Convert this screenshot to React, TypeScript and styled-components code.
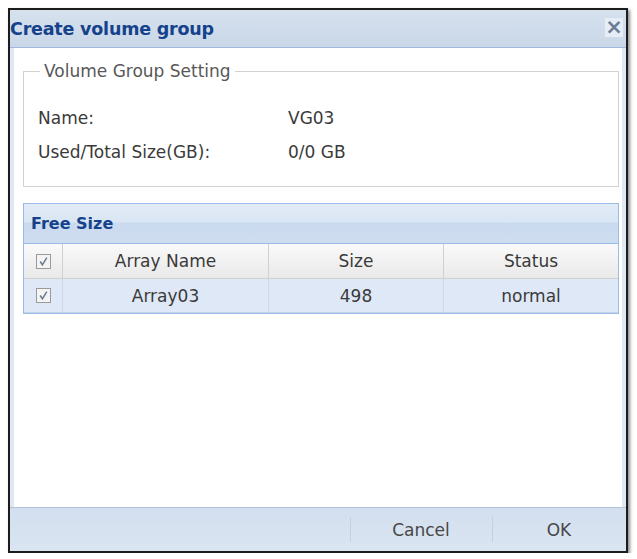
import React from "react";
import styled, { createGlobalStyle } from "styled-components";

const GlobalStyle = createGlobalStyle`
  html, body {
    margin: 0;
    padding: 0;
    background: #ffffff;
  }
  body {
    font-family: "DejaVu Sans", Verdana, sans-serif;
  }
`;

const Page = styled.div`
  padding: 8px 0 0 8px;
`;

const Window = styled.div`
  width: 620px;
  height: 545px;
  box-sizing: border-box;
  border: 2px solid #1c1c1c;
  box-shadow: 2px 2px 3px rgba(0, 0, 0, 0.45);
  display: flex;
  flex-direction: column;
  background: #dfe8f3;
`;

const TitleBar = styled.div`
  height: 37px;
  flex: none;
  display: flex;
  align-items: center;
  justify-content: space-between;
  padding: 0 3px 0 0;
  background: linear-gradient(#d6e1ee, #c9d7e8);
  border-bottom: 1px solid #9fb9dc;
`;

const Title = styled.h1`
  margin: 0;
  font-size: 17.5px;
  font-weight: bold;
  color: #15428b;
  letter-spacing: -0.2px;
`;

const CloseButton = styled.div`
  width: 18px;
  height: 19px;
  margin-top: -2px;
  display: flex;
  align-items: center;
  justify-content: center;
  background: #e6edf5;
  color: #6a7d96;
  font-weight: bold;
  font-size: 21px;
  line-height: 1;
`;

const Body = styled.div`
  flex: 1;
  background: #ffffff;
  margin: 0 4px;
  padding: 13px 3px 0 9px;
  display: flex;
  flex-direction: column;
  gap: 16px;
`;

const FieldSet = styled.fieldset`
  margin: 0;
  padding: 27px 14px 24px;
  border: 1px solid #d2d2d2;
  display: grid;
  grid-template-columns: 250px 1fr;
  row-gap: 14px;
  font-size: 17px;
  color: #3a3a3a;
`;

const Legend = styled.legend`
  margin-left: 2px;
  padding: 0 4px;
  font-size: 17px;
  color: #585858;
`;

const Label = styled.div``;

const Value = styled.div``;

const Grid = styled.div`
  border: 1px solid #99bbe8;
  font-size: 17px;
`;

const GridTitle = styled.div`
  height: 39px;
  display: flex;
  align-items: center;
  padding-left: 7px;
  background: linear-gradient(#e2ebf6 0%, #dae6f4 45%, #cadaef 50%, #cfddf0 100%);
  border-bottom: 1px solid #99bbe8;
  font-weight: bold;
  font-size: 16px;
  color: #15428b;
`;

const Row = styled.div<{ $header?: boolean }>`
  display: grid;
  grid-template-columns: 39px 206px 175px 1fr;
  height: ${(p) => (p.$header ? "34px" : "33px")};
  background: ${(p) =>
    p.$header ? "linear-gradient(#fafafa, #e9e9e9)" : "#dfe8f6"};
  border-bottom: 1px solid ${(p) => (p.$header ? "#d0d0d0" : "#c3d3ea")};
  color: #3a3a3a;
`;

const Cell = styled.div<{ $header?: boolean }>`
  display: flex;
  align-items: center;
  justify-content: center;
  border-right: 1px solid ${(p) => (p.$header ? "#d0d0d0" : "#cbd8ea")};
  &:last-child {
    border-right: none;
  }
`;

const CheckBox = styled.div`
  width: 13px;
  height: 13px;
  border: 1px solid #9a9a9a;
  background: #f4f4f4;
  display: flex;
  align-items: center;
  justify-content: center;
`;

const Footer = styled.div`
  height: 43px;
  flex: none;
  display: flex;
  justify-content: flex-end;
  background: linear-gradient(#d3dfee, #dae5f2);
  border-top: 1px solid #b3c4da;
`;

const Button = styled.div<{ $width: number }>`
  width: ${(p) => p.$width}px;
  display: flex;
  align-items: center;
  justify-content: center;
  font-size: 17px;
  color: #474747;
  position: relative;
  &::before {
    content: "";
    position: absolute;
    left: 0;
    top: 9px;
    bottom: 9px;
    border-left: 1px solid #c3d0e0;
  }
`;

const Check = () => (
  <CheckBox>
    <svg width="11" height="11" viewBox="0 0 10 10">
      <path d="M2 5 L4 8 L8 1.5" fill="none" stroke="#6b7b8e" strokeWidth="1.4" />
    </svg>
  </CheckBox>
);

const rows = [{ name: "Array03", size: 498, status: "normal" }];

const App = () => {
  return (
    <Page>
      <GlobalStyle />
      <Window>
        <TitleBar>
          <Title>Create volume group</Title>
          <CloseButton>×</CloseButton>
        </TitleBar>
        <Body>
          <FieldSet>
            <Legend>Volume Group Setting</Legend>
            <Label>Name:</Label>
            <Value>VG03</Value>
            <Label>Used/Total Size(GB):</Label>
            <Value>0/0 GB</Value>
          </FieldSet>
          <Grid>
            <GridTitle>Free Size</GridTitle>
            <Row $header>
              <Cell $header>
                <Check />
              </Cell>
              <Cell $header>Array Name</Cell>
              <Cell $header>Size</Cell>
              <Cell $header>Status</Cell>
            </Row>
            {rows.map((r) => (
              <Row key={r.name}>
                <Cell>
                  <Check />
                </Cell>
                <Cell>{r.name}</Cell>
                <Cell>{r.size}</Cell>
                <Cell>{r.status}</Cell>
              </Row>
            ))}
          </Grid>
        </Body>
        <Footer>
          <Button $width={142}>Cancel</Button>
          <Button $width={134}>OK</Button>
        </Footer>
      </Window>
    </Page>
  );
};

export default App;
